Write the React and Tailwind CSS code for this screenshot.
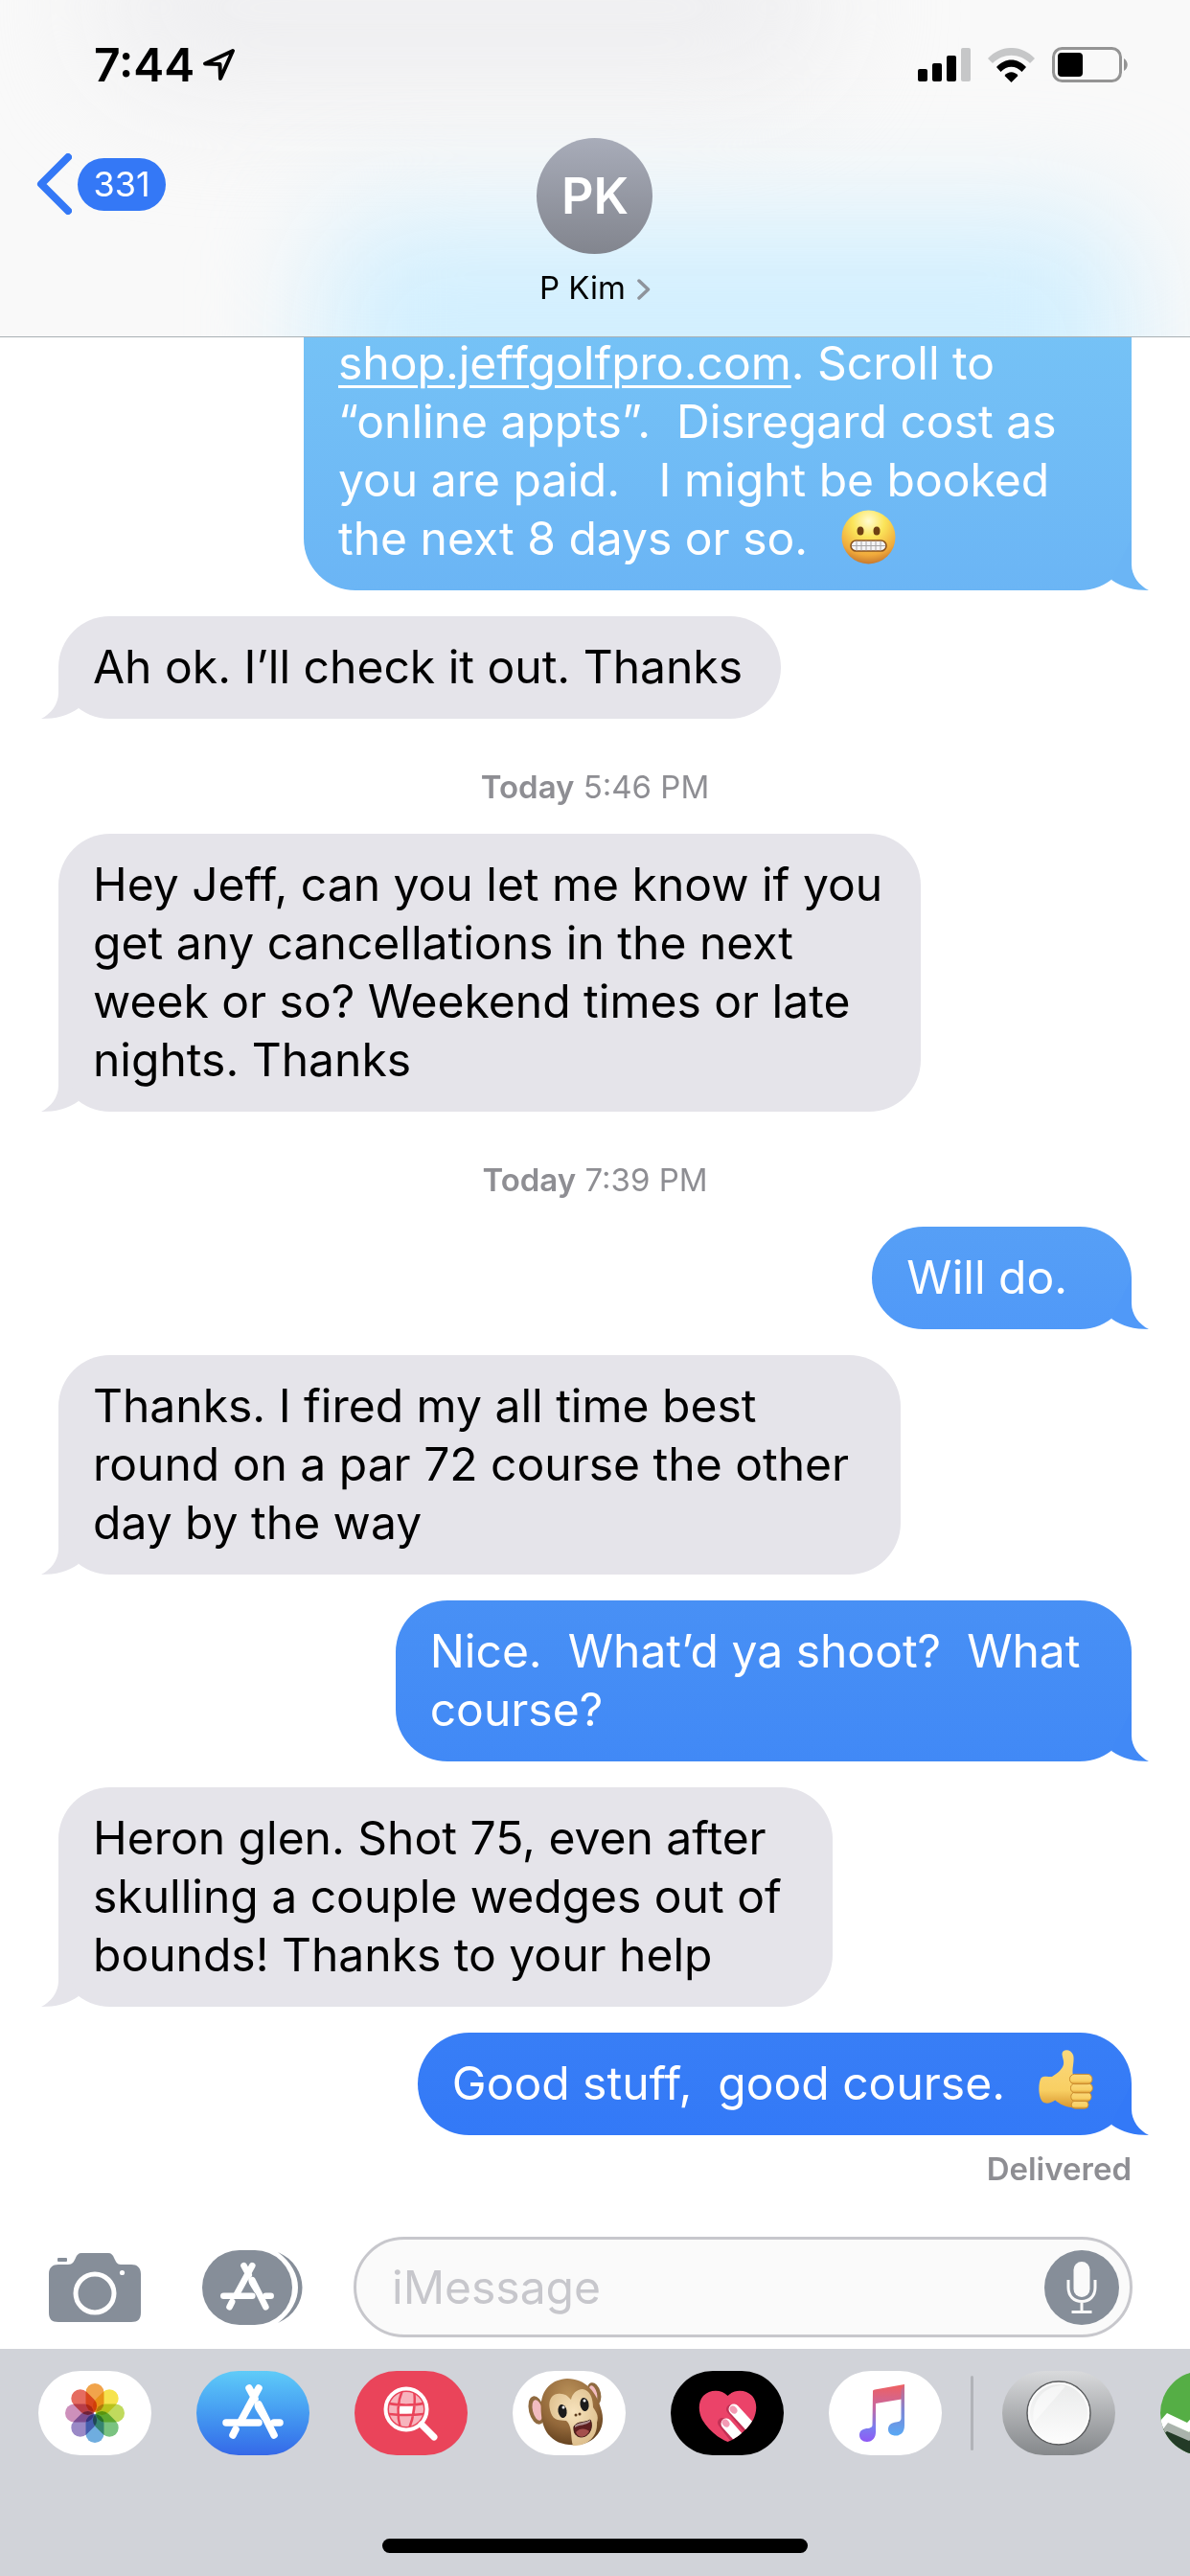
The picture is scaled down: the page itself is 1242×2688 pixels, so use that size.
import { useState } from 'react';

const messages = [
  {
    id: 1,
    from: 'me',
    cut: true,
    bg: 'bg-linear-to-b from-[#76c3f6] to-[#6bb5f5]',
    tail: 'text-[#6bb5f5]',
    lines: ['“online appts”.  Disregard cost as', 'you are paid.   I might be booked', 'the next 8 days or so.  '],
    link: 'shop.jeffgolfpro.com',
    afterLink: '. Scroll to',
    emoji: 'grimace',
  },
  { id: 2, from: 'them', lines: ['Ah ok. I’ll check it out. Thanks'] },
  { id: 3, stamp: '5:46 PM' },
  {
    id: 4,
    from: 'them',
    lines: ['Hey Jeff, can you let me know if you', 'get any cancellations in the next', 'week or so? Weekend times or late', 'nights. Thanks'],
  },
  { id: 5, stamp: '7:39 PM' },
  {
    id: 6,
    from: 'me',
    bg: 'bg-linear-to-b from-[#569ff6] to-[#5099f8]',
    tail: 'text-[#5099f8]',
    lines: ['Will do.  '],
  },
  {
    id: 7,
    from: 'them',
    lines: ['Thanks. I fired my all time best ', 'round on a par 72 course the other ', 'day by the way'],
  },
  {
    id: 8,
    from: 'me',
    bg: 'bg-linear-to-b from-[#4890f5] to-[#4189f6]',
    tail: 'text-[#4189f6]',
    lines: ['Nice.  What’d ya shoot?  What ', 'course?'],
  },
  {
    id: 9,
    from: 'them',
    lines: ['Heron glen. Shot 75, even after ', 'skulling a couple wedges out of ', 'bounds! Thanks to your help'],
  },
  {
    id: 10,
    from: 'me',
    bg: 'bg-linear-to-b from-[#387ef6] to-[#3379f7]',
    tail: 'text-[#3379f7]',
    lines: ['Good stuff,  good course.  '],
    emoji: 'thumb',
  },
];

const petals = ['#f09a37', '#f5e03a', '#b9d64b', '#6cbd72', '#5fa4dc', '#8f7cc0', '#c884b4', '#e25c4f'];

const GrimaceEmoji = () => (
  <svg role="img" aria-label="grimacing face" className="inline-block w-[57px] h-[57px] ml-2 -my-3 align-[2px]" viewBox="0 0 57 57">
    <defs>
      <radialGradient id="skin" cx="0.5" cy="0.2" r="0.85">
        <stop offset="0" stopColor="#fffbd0" />
        <stop offset="0.35" stopColor="#fbe55a" />
        <stop offset="0.75" stopColor="#f0a93b" />
        <stop offset="1" stopColor="#b9692a" />
      </radialGradient>
    </defs>
    <circle cx="28.5" cy="28.5" r="28" fill="url(#skin)" />
    <ellipse cx="20" cy="22" rx="3.5" ry="4.5" fill="#6e4013" />
    <ellipse cx="37" cy="22" rx="3.5" ry="4.5" fill="#6e4013" />
    <rect x="10" y="32" width="37" height="11" rx="5.5" fill="#f4f4f6" stroke="#8a5320" strokeWidth="1.6" />
    <path d="M11 37.5H46M16 32.5v10M21 32.5v10M26 32.5v10M31 32.5v10M36 32.5v10M41 32.5v10" stroke="#a6a4a6" strokeWidth="1" />
  </svg>
);

const ThumbEmoji = () => (
  <svg role="img" aria-label="thumbs up" className="inline-block w-[57px] h-[62px] ml-2 -my-3 align-[2px]" viewBox="0 0 172 186">
    <defs>
      <linearGradient id="hand" x1="0" y1="0" x2="0" y2="1">
        <stop offset="0" stopColor="#fbd97c" />
        <stop offset="0.7" stopColor="#f8cf63" />
        <stop offset="1" stopColor="#d99730" />
      </linearGradient>
    </defs>
    <path
      d="M74 14C72-4 102-6 109 16C114 36 104 56 108 78L120 180C96 186 68 172 52 158C40 168 22 170 14 164C-2 150-2 104 8 88C16 80 30 84 42 84C60 74 78 58 79 42C79 30 75 24 74 14Z"
      fill="url(#hand)"
    />
    <g fill="url(#hand)" stroke="#c98a2c" strokeWidth="3">
      <rect x="103" y="160" width="54" height="24" rx="12" />
      <rect x="102" y="133" width="64" height="28" rx="13" />
      <rect x="101" y="105" width="69" height="30" rx="14" />
      <rect x="98" y="76" width="71" height="31" rx="15" />
    </g>
  </svg>
);

const Tail = ({ mine, color }) => (
  <svg
    className={`absolute bottom-0 w-[72px] h-[54px] ${mine ? '-right-[18px]' : '-left-[18px] -scale-x-100'} ${color}`}
    viewBox="0 0 72 54"
    fill="currentColor"
  >
    <path d="M54 0V27C54 39 62 49 72 54C57 54 44 51 33 43Z" />
  </svg>
);

const Bubble = ({ message }) => {
  const mine = message.from === 'me';
  return (
    <div
      className={`relative w-fit pl-9 pr-10 pt-[22px] pb-6 text-[48px] leading-[61px] whitespace-pre ${
        mine ? `self-end text-white ${message.bg}` : 'self-start text-black bg-[#e5e4ea]'
      } ${message.cut ? 'min-w-[864px] rounded-b-[54px]' : 'rounded-[54px]'}`}
    >
      <Tail mine={mine} color={mine ? message.tail : 'text-[#e5e4ea]'} />
      <div className="relative">
        {message.link && (
          <p>
            <a href="#shop" className="underline decoration-[3px] underline-offset-[6px]">
              {message.link}
            </a>
            {message.afterLink}
          </p>
        )}
        {message.lines.map((line, i) => (
          <p key={line}>
            {line}
            {i === message.lines.length - 1 && message.emoji === 'grimace' && <GrimaceEmoji />}
            {i === message.lines.length - 1 && message.emoji === 'thumb' && <ThumbEmoji />}
          </p>
        ))}
      </div>
    </div>
  );
};

// The "A" made of three sticks, shared by the toolbar and the dock
const StoreGlyph = () => (
  <g stroke="white" strokeWidth="7.5" strokeLinecap="round" fill="none">
    <path d="M-4 -26L2 -15" />
    <path d="M6 -26L-13 9" />
    <path d="M-28 10H6" />
    <path d="M-18 17L-21 23" />
    <path d="M22 10H28" />
    <path d="M6 -9L22 23" />
    <path d="M3 -14C2 -10 2 -6 5 -2L10 6" strokeWidth="2" />
  </g>
);

const Header = () => (
  <header className="relative z-10 overflow-hidden bg-[#f9f9f9] border-b border-[#a9b0b4] shrink-0">
    {/* colours of the scrolled content showing through the bar */}
    <div className="absolute -top-20 left-[8%] w-[62%] h-44 rounded-full bg-[#eeeef0] blur-[60px]" />
    <div className="absolute top-[225px] left-[27%] right-[5%] h-[300px] rounded-[60px] bg-[#d2effe] blur-[60px]" />

    <div className="relative flex items-center justify-between h-[136px] pl-[98px] pr-16">
      <div className="flex items-center gap-2">
        <span className="text-[48px] leading-none font-semibold">7:44</span>
        <svg className="w-9 h-9" viewBox="0 0 36 36" fill="none" stroke="black" strokeWidth="4" strokeLinejoin="round">
          <path d="M32 3L3 16.500L18.500 17L19 32Z" />
        </svg>
      </div>
      <div className="flex items-center gap-[18px]">
        <svg className="w-[55px] h-9" viewBox="0 0 55 36">
          <rect x="0" y="22" width="10" height="13" rx="2" />
          <rect x="15" y="16" width="10" height="19" rx="2" />
          <rect x="30" y="8" width="10" height="27" rx="2" />
          <rect x="45" y="0" width="10" height="35" rx="2" fill="#c6c7c8" />
        </svg>
        <svg className="w-[49px] h-9" viewBox="0 0 49 36">
          <path d="M0 11C14-3.700 35-3.700 49 11L44 16C33 5 16 5 5 16Z" fill="#c6c7c8" />
          <path d="M9 20C18 10 31 10 40 20L35.500 25C29 18 20 18 13.500 25Z" />
          <path d="M17.500 29C21 24 28 24 31.500 29L24.500 36Z" />
        </svg>
        <svg className="w-20 h-[38px]" viewBox="0 0 80 38">
          <rect x="1.500" y="1.500" width="70" height="34" rx="9" fill="none" stroke="#949494" strokeWidth="3" />
          <rect x="6" y="6" width="26" height="25" rx="4" />
          <path d="M75 12C80 15 80 22 75 25Z" fill="#949494" />
        </svg>
      </div>
    </div>

    <div className="relative grid grid-cols-3 items-start pt-2 pb-[29px] px-[38px]">
      <button type="button" aria-label="Back, 331 unread" className="flex items-center gap-[6px] mt-4 w-fit">
        <svg className="w-[37px] h-16" viewBox="0 0 37 64" fill="none" stroke="#3478f6" strokeWidth="8" strokeLinecap="round" strokeLinejoin="round">
          <path d="M33 4L5 32L33 60" />
        </svg>
        <span className="flex items-center justify-center w-[92px] h-[55px] rounded-full bg-[#3478f6] text-white text-[36px] leading-none">
          331
        </span>
      </button>
      <button type="button" className="flex flex-col items-center gap-[13px] justify-self-center">
        <span className="flex items-center justify-center size-[121px] rounded-full bg-linear-to-b from-[#a8acb9] to-[#82858e] text-white text-[52px] font-semibold">
          PK
        </span>
        <span className="flex items-center gap-3 text-[33px] leading-[44px]">
          P Kim
          <svg className="w-[14px] h-[22px] mt-1" viewBox="0 0 14 22" fill="none" stroke="#8e939b" strokeWidth="3.500" strokeLinecap="round" strokeLinejoin="round">
            <path d="M2 2L11.500 11L2 20" />
          </svg>
        </span>
      </button>
    </div>
  </header>
);

const Composer = () => {
  const [text, setText] = useState('');
  return (
    <form className="flex items-center shrink-0 pl-[51px] pr-[60px] pt-5 pb-3" onSubmit={(e) => e.preventDefault()}>
      <button type="button" aria-label="Camera" className="shrink-0 mr-16">
        <svg className="w-24 h-[72px]" viewBox="0 0 96 72">
          <path
            d="M10 12H20C25 12 26 9 28 5C29 2 31 0 34 0H62C65 0 67 2 68 5C70 9 71 12 75 12H86C92 12 96 15 96 22V62C96 69 93 72 86 72H10C3 72 0 69 0 62V22C0 15 4 12 10 12Z"
            fill="#868e99"
          />
          <rect x="9" y="5" width="10" height="4" rx="1" fill="#868e99" />
          <circle cx="48" cy="42" r="20" fill="none" stroke="white" strokeWidth="5" />
          <circle cx="76.500" cy="20.500" r="2.600" fill="white" />
        </svg>
      </button>
      <button type="button" aria-label="Apps" className="shrink-0 mr-[53px]">
        <svg className="w-[105px] h-[78px]" viewBox="0 0 105 78">
          <rect width="94" height="78" rx="39" fill="#868e99" />
          <path d="M79 2C113 17 113 61 79 76C107 55 107 23 79 2Z" fill="#868e99" />
          <g transform="translate(47 39) scale(0.88)">
            <StoreGlyph />
          </g>
        </svg>
      </button>
      <div className="flex items-center flex-1 min-w-0 h-[105px] pl-[37px] pr-[11px] border-3 border-[#c7c7cc] rounded-full bg-[#fafafa]">
        <input
          type="text"
          aria-label="iMessage"
          placeholder="iMessage"
          value={text}
          onChange={(e) => setText(e.target.value)}
          className="flex-1 min-w-0 bg-transparent outline-none text-[48px] leading-[61px] placeholder:text-[#c7c7cc]"
        />
        <button type="button" aria-label="Record audio" className="shrink-0">
          <svg className="size-[78px]" viewBox="0 0 78 78" fill="none" stroke="#fafafa">
            <circle cx="39" cy="39" r="39" fill="#868e99" stroke="none" />
            <rect x="30.500" y="12" width="17" height="37" rx="8.500" fill="#fafafa" stroke="none" />
            <path d="M25 31V39C25 48 31 53.500 39 53.500S53 48 53 39V31M39 54V64M28.500 64.500H49.500" strokeWidth="3" />
          </svg>
        </button>
      </div>
    </form>
  );
};

const DockButton = ({ label, bg, children }) => (
  <button type="button" aria-label={label} className={`shrink-0 w-[118px] h-[88px] rounded-[44px] overflow-hidden ${bg}`}>
    <svg className="w-[118px] h-[88px]" viewBox="0 0 118 88">
      {children}
    </svg>
  </button>
);

const Dock = () => (
  <footer className="shrink-0 bg-[#d1d3d9] pt-[23px] pb-6 overflow-hidden">
    <div className="flex items-center gap-[47px] pl-10">
      <DockButton label="Photos" bg="bg-white">
        <g transform="translate(59 44)">
          {petals.map((color, i) => (
            <rect
              key={color}
              x="-9.500"
              y="-31"
              width="19"
              height="30"
              rx="9.500"
              fill={color}
              fillOpacity="0.9"
              transform={`rotate(${i * 45})`}
              className="mix-blend-multiply"
            />
          ))}
        </g>
      </DockButton>
      <DockButton label="App Store" bg="bg-linear-to-b from-[#5fcbf8] to-[#3568e8]">
        <g transform="translate(59 44)">
          <StoreGlyph />
        </g>
      </DockButton>
      <DockButton label="Image search" bg="bg-[#ea445a]">
        <g fill="none" stroke="white">
          <circle cx="54" cy="40" r="18" fill="white" fillOpacity="0.6" stroke="none" />
          <path d="M48 34h13l-1 11h-14z" fill="white" stroke="none" />
          <path d="M36 34C46 36 62 36 72 34M36 45C46 46 62 46 72 45M50 20C45 32 44 46 48 60M62 20C64 32 62 48 57 60" stroke="#ea445a" strokeWidth="2.500" />
          <circle cx="54" cy="40" r="21.500" strokeWidth="4" />
          <path d="M70 56L83 69" strokeWidth="7" strokeLinecap="round" />
        </g>
      </DockButton>
      <DockButton label="Animoji" bg="bg-white">
        <defs>
          <radialGradient id="fur" cx="0.45" cy="0.25" r="0.8">
            <stop offset="0" stopColor="#b99159" />
            <stop offset="0.6" stopColor="#93683a" />
            <stop offset="1" stopColor="#5e3d1c" />
          </radialGradient>
          <radialGradient id="face" cx="0.5" cy="0.4" r="0.7">
            <stop offset="0" stopColor="#f7e3bd" />
            <stop offset="1" stopColor="#d9b985" />
          </radialGradient>
        </defs>
        <ellipse cx="25" cy="41" rx="8" ry="15" transform="rotate(-14 25 41)" fill="#8f6a40" />
        <ellipse cx="26" cy="41" rx="5" ry="11" transform="rotate(-14 26 41)" fill="#f2bcc0" />
        <ellipse cx="85" cy="24" rx="7" ry="12" transform="rotate(-14 85 24)" fill="#8f6a40" />
        <ellipse cx="84" cy="24" rx="4" ry="9" transform="rotate(-14 84 24)" fill="#f2bcc0" />
        <path d="M30 46C27 20 40 9 57 8C76 8 88 22 93 42C98 62 84 76 68 77C46 79 32 68 30 46Z" fill="url(#fur)" />
        <path
          d="M40 44C35 30 42 22 51 24C56 24 59 28 61 30C62 24 67 19 73 19C81 20 84 29 84 38C88 44 90 47 88 54C89 70 76 79 63 78C60 70 63 58 56 52C48 51 43 52 40 44Z"
          fill="url(#face)"
        />
        <ellipse cx="52" cy="42" rx="4.500" ry="7" transform="rotate(-10 52 42)" fill="#1c1c1c" />
        <ellipse cx="75" cy="35" rx="4.500" ry="7" transform="rotate(-10 75 35)" fill="#1c1c1c" />
        <circle cx="53" cy="38" r="1.500" fill="white" />
        <circle cx="75" cy="31" r="1.500" fill="white" />
        <circle cx="66" cy="46" r="1.500" fill="#5c3a1e" />
        <circle cx="70" cy="45" r="1.500" fill="#5c3a1e" />
        <path d="M64 58C68 52 74 55 81 51C84 56 82 65 76 68C69 71 63 67 64 58Z" fill="#5f1f20" stroke="#3d1b14" strokeWidth="1" />
        <path d="M66 64C70 59 77 60 80 63C76 70 69 71 66 64Z" fill="#a4504c" />
        <path d="M65 57C69 53 75 55 81 51L81 53C76 57 70 56 65 59Z" fill="white" fillOpacity="0.5" />
      </DockButton>
      <DockButton label="Digital Touch" bg="bg-black">
        <defs>
          <clipPath id="heart">
            <path d="M59.500 26C66 19 78 19 85 26C91 33 90 43 86 51C80 61 70 70 59.500 74C49 70 39 61 33 51C29 43 28 33 34 26C41 19 53 19 59.500 26Z" />
          </clipPath>
        </defs>
        <g clipPath="url(#heart)">
          <rect width="118" height="88" fill="#eb4369" />
          <path d="M63 40L87 68M54 54L74 80" stroke="#a92547" strokeWidth="10" strokeLinecap="round" strokeOpacity="0.6" />
          <path d="M66 40L90 66M58 55L80 80" stroke="white" strokeWidth="11" strokeLinecap="round" />
          <ellipse cx="65.500" cy="40.500" rx="3.500" ry="4.500" transform="rotate(-40 65.500 40.500)" fill="#f39ab4" />
          <ellipse cx="57.500" cy="54.500" rx="3.500" ry="4.500" transform="rotate(-40 57.500 54.500)" fill="#f39ab4" />
        </g>
      </DockButton>
      <DockButton label="Music" bg="bg-white">
        <defs>
          <linearGradient id="noteTop" x1="0" y1="0" x2="0" y2="1">
            <stop offset="0" stopColor="#f0605f" />
            <stop offset="0.4" stopColor="#c767a0" />
            <stop offset="0.75" stopColor="#7a7df0" />
            <stop offset="1" stopColor="#9059f5" />
          </linearGradient>
          <linearGradient id="noteRight" x1="0" y1="0" x2="0" y2="1">
            <stop offset="0" stopColor="#d8637c" />
            <stop offset="0.5" stopColor="#7f86d4" />
            <stop offset="1" stopColor="#58a9f5" />
          </linearGradient>
        </defs>
        <path
          d="M46 21C46 20 47 20 48 19.500L79 14V29L49 34V64C49 70 45 74 40 74C35 74 32 71 32 67C32 62 36 60 41 60C44 59 45.500 59 45.500 56Z"
          fill="url(#noteTop)"
        />
        <path d="M75.500 20L79 14V57C79 64 75 67.500 70 67.500C65 67.500 62 65 62 61C62 56 66 54 70 53.500C74 53 75.500 52 75.500 49Z" fill="url(#noteRight)" />
      </DockButton>
      <div className="shrink-0 w-[3px] h-[78px] -mx-[17px] rounded-full bg-[#b1b3b8]" />
      <DockButton label="Mirror" bg="bg-linear-to-b from-[#d9dadc] to-[#85888b]">
        <defs>
          <linearGradient id="glass" x1="0" y1="0" x2="0" y2="1">
            <stop offset="0" stopColor="#e9eaea" />
            <stop offset="1" stopColor="#fdfdfd" />
          </linearGradient>
        </defs>
        <circle cx="59" cy="44" r="33" fill="url(#glass)" stroke="#5d5f61" strokeWidth="1.500" />
        <path d="M33 54C29 34 42 16 62 15L66 16Z" fill="white" fillOpacity="0.5" />
        <circle cx="59" cy="44" r="31" fill="none" stroke="#fbfbfb" strokeWidth="2" />
      </DockButton>
      <DockButton label="Stocks" bg="bg-[#55ae45]">
        <path d="M0 60L7 55L30 68L60 40V88H0Z" fill="#233b27" />
        <path d="M0 55L7 53L30 64L60 32V52L30 73L7 63L3 66Z" fill="#aab3ac" />
        <path d="M0 52L7 44L28 54L60 18V38L30 64L8 54L2 62Z" fill="white" />
      </DockButton>
    </div>
    <div className="w-[444px] h-[15px] mt-[87px] mx-auto rounded-full bg-black" />
  </footer>
);

export default function App() {
  return (
    <div className="flex flex-col h-screen overflow-hidden bg-white text-black font-['Inter',sans-serif]">
      <Header />
      {/* older messages slide up under the header */}
      <main className="flex flex-col flex-1 justify-end min-h-0 px-[61px] pb-[29px]">
        <div className="flex flex-col gap-[27px]">
          {messages.map((message) =>
            message.stamp ? (
              <p key={message.id} className="mt-[22px] text-center text-[33px] leading-[44px] text-[#8e8e93]">
                <span className="font-semibold">Today</span> {message.stamp}
              </p>
            ) : (
              <Bubble key={message.id} message={message} />
            )
          )}
        </div>
        <p className="mt-[13px] text-right text-[33px] leading-[44px] font-semibold text-[#8e8e93]">Delivered</p>
      </main>
      <Composer />
      <Dock />
    </div>
  );
}
